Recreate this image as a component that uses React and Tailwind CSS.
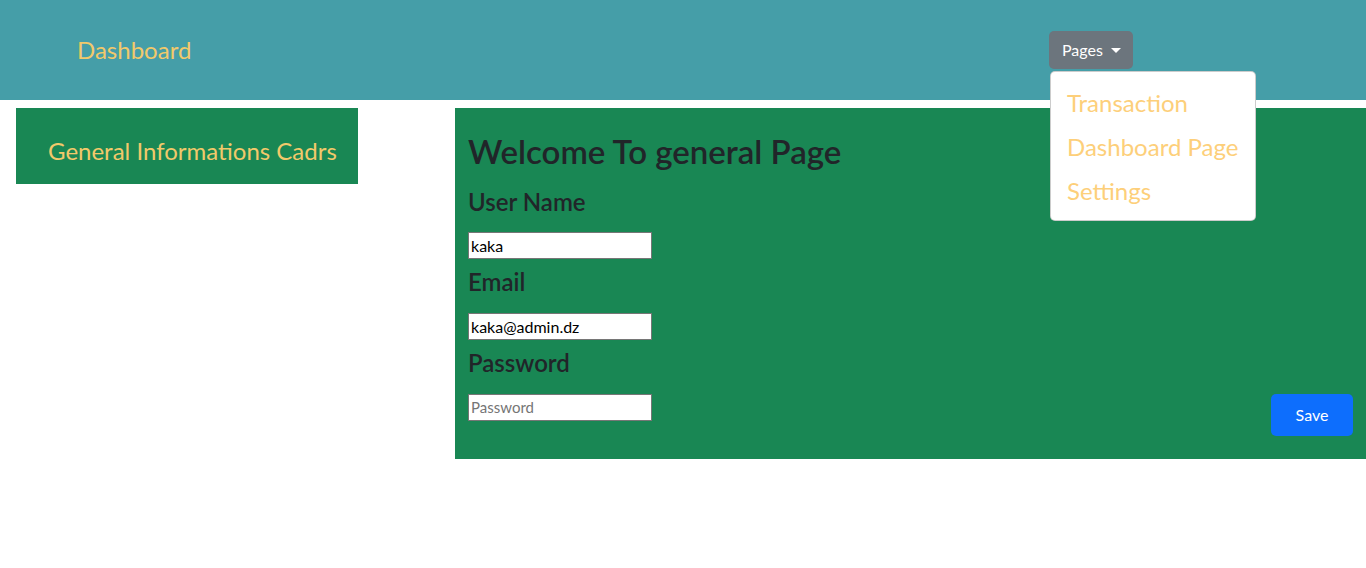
import { useState } from "react";

function PagesDropdown() {
  const [open, setOpen] = useState(true);
  return (
    <div className="relative">
      <button
        onClick={() => setOpen(!open)}
        className="bg-[#6c757d] text-white text-[16px] h-[38px] pl-[13px] pr-[12px] rounded-[5px] flex items-center gap-2"
      >
        Pages
        <span className="inline-block w-0 h-0 border-x-[5px] border-x-transparent border-t-[5px] border-t-white mt-[1px]" />
      </button>
      {open && (
        <div className="absolute left-[1px] top-[40px] w-[206px] bg-white border border-black/20 rounded-[5px] pt-[9px] pb-[7px] z-10">
          {["Transaction", "Dashboard Page", "Settings"].map((item) => (
            <a key={item} href="#" className="block px-4 h-[44px] leading-[44px] text-[24px] text-[#fdcf7a]">
              {item}
            </a>
          ))}
        </div>
      )}
    </div>
  );
}

export default function App() {
  return (
    <div className="min-h-screen bg-white font-['Lato',sans-serif]">
      <header className="h-[100px] bg-[#459ea8] flex items-center pl-[77px]">
        <a href="#" className="text-[24px] text-[#f2c96b] w-[972px]">Dashboard</a>
        <PagesDropdown />
      </header>

      <div className="flex items-start mt-[8px] pl-[16px]">
        <div className="w-[342px] h-[76px] bg-[#198754] flex items-center pl-[32px] pt-[10px]">
          <span className="text-[24px] text-[#f2c96b]">General Informations Cadrs</span>
        </div>

        <div className="ml-[97px] flex-1 bg-[#198754] h-[351px] px-[13px] pt-[24px] flex">
          <div className="flex-1">
            <h1 className="text-[33px] font-semibold text-[#212529] leading-[1.2] mb-[16px]">Welcome To general Page</h1>
            <form className="flex flex-col">
              <label className="text-[24px] font-semibold text-[#212529] leading-[1.2] mb-[16px]">User Name</label>
              <input defaultValue="kaka" className="w-[184px] h-[27px] bg-white border border-[#767676] text-[16px] px-[2px] text-black outline-none" />
              <label className="text-[24px] font-semibold text-[#212529] leading-[1.2] mt-[9px] mb-[16px]">Email</label>
              <input defaultValue="kaka@admin.dz" className="w-[184px] h-[27px] bg-white border border-[#767676] text-[16px] px-[2px] text-black outline-none" />
              <label className="text-[24px] font-semibold text-[#212529] leading-[1.2] mt-[9px] mb-[16px]">Password</label>
              <input type="password" placeholder="Password" className="w-[184px] h-[27px] bg-white border border-[#767676] text-[15px] px-[2px] text-black placeholder:text-[#757575] outline-none" />
            </form>
          </div>
          <div className="flex items-start pt-[262px]">
            <button className="bg-[#0d6efd] text-white text-[16px] w-[82px] h-[42px] rounded-[5px]">Save</button>
          </div>
        </div>
      </div>
    </div>
  );
}
